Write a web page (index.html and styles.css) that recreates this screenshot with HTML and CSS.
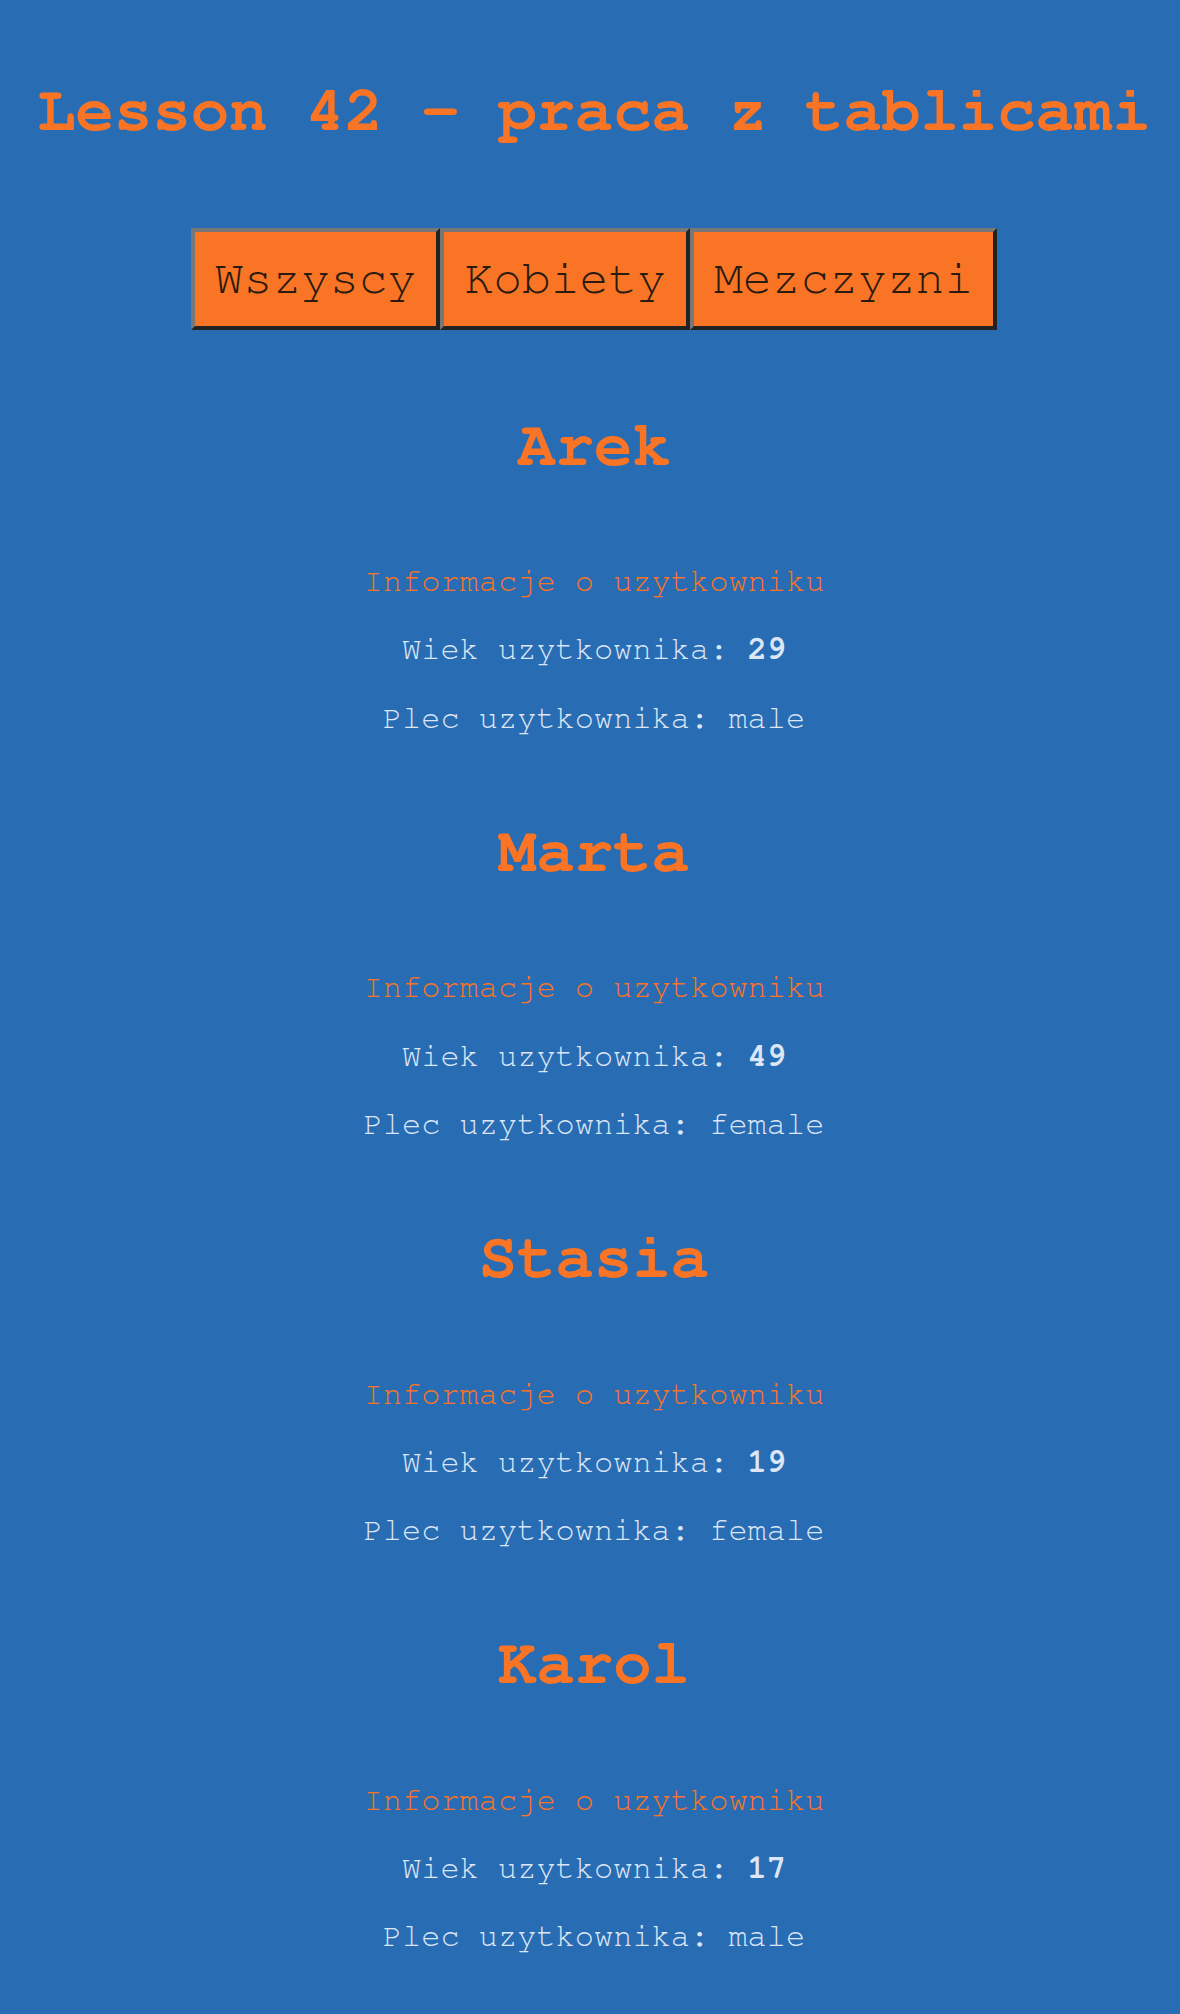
FILE: index.html
```html
<!DOCTYPE html>
<html lang="pl">
<head>
<meta charset="utf-8">
<title>Lesson 42 - praca z tablicami</title>
<link rel="stylesheet" href="styles.css">
</head>
<body>
<h1 class="title">Lesson 42 - praca z tablicami</h1>
<div class="filters">
  <button class="btn">Wszyscy</button>
  <button class="btn">Kobiety</button>
  <button class="btn">Mezczyzni</button>
</div>
<div class="users">
  <div class="user">
    <h2 class="name">Arek</h2>
    <p class="info">Informacje o uzytkowniku</p>
    <p class="row">Wiek uzytkownika: <strong>29</strong></p>
    <p class="row">Plec uzytkownika: male</p>
  </div>
  <div class="user">
    <h2 class="name">Marta</h2>
    <p class="info">Informacje o uzytkowniku</p>
    <p class="row">Wiek uzytkownika: <strong>49</strong></p>
    <p class="row">Plec uzytkownika: female</p>
  </div>
  <div class="user">
    <h2 class="name">Stasia</h2>
    <p class="info">Informacje o uzytkowniku</p>
    <p class="row">Wiek uzytkownika: <strong>19</strong></p>
    <p class="row">Plec uzytkownika: female</p>
  </div>
  <div class="user">
    <h2 class="name">Karol</h2>
    <p class="info">Informacje o uzytkowniku</p>
    <p class="row">Wiek uzytkownika: <strong>17</strong></p>
    <p class="row">Plec uzytkownika: male</p>
  </div>
</div>
</body>
</html>
```
FILE: styles.css
```css
html, body {
  margin: 0;
  padding: 0;
  background: #286cb4;
}

body {
  font-family: "Nimbus Mono PS", "Nimbus Mono L", "FreeMono", "Courier 10 Pitch", "Liberation Mono", monospace;
  color: #dce6f5;
  text-align: center;
  min-height: 2014px;
  padding: 75px 0 0 8px;
  box-sizing: border-box;
}

.title {
  margin: 0 0 80px;
  font-size: 64px;
  font-weight: bold;
  color: #f97424;
  line-height: 72.5px;
}

.filters {
  display: flex;
  justify-content: center;
}

.btn {
  font-family: inherit;
  font-size: 48px;
  line-height: 54px;
  color: #2a1b10;
  background: #f97424;
  padding: 20px;
  margin: 0;
  border-width: 4px;
  border-style: solid;
  border-color: #777777 #222222 #222222 #777777;
  border-radius: 0;
}

.name {
  margin: 80px 0 81px;
  font-size: 64px;
  font-weight: bold;
  color: #f97424;
  line-height: 72.5px;
}

.info,
.row {
  margin: 32px 0;
  font-size: 32px;
  line-height: 36.25px;
}

.info {
  color: #f97424;
}

.row strong {
  font-weight: bold;
}
```
